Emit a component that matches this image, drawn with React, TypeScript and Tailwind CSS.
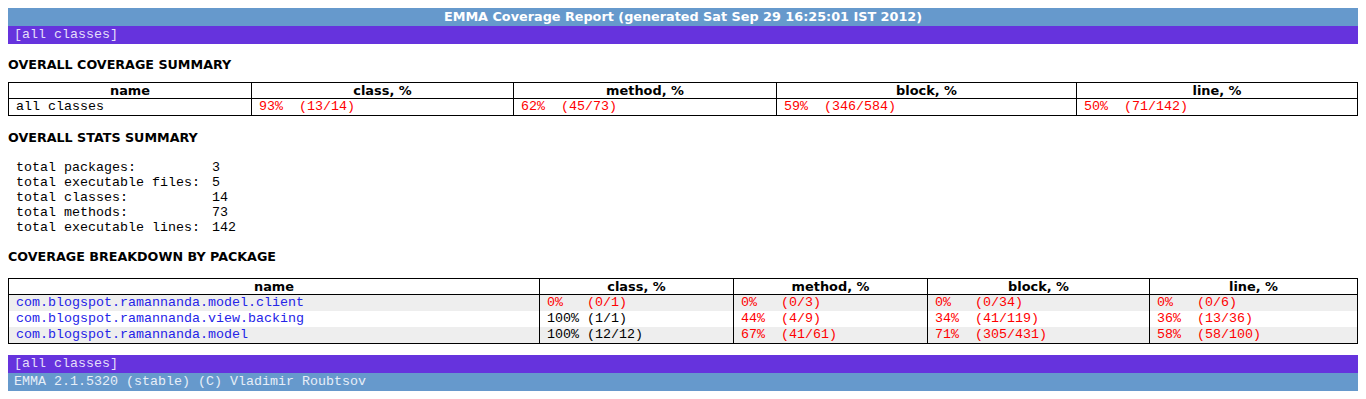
import React from "react";

type Cov = { pct: string; frac: string; low: boolean };

const summary: Cov[] = [
  { pct: "93%", frac: "(13/14)", low: true },
  { pct: "62%", frac: "(45/73)", low: true },
  { pct: "59%", frac: "(346/584)", low: true },
  { pct: "50%", frac: "(71/142)", low: true },
];

const packages: { name: string; cells: Cov[] }[] = [
  {
    name: "com.blogspot.ramannanda.model.client",
    cells: [
      { pct: "0%", frac: "(0/1)", low: true },
      { pct: "0%", frac: "(0/3)", low: true },
      { pct: "0%", frac: "(0/34)", low: true },
      { pct: "0%", frac: "(0/6)", low: true },
    ],
  },
  {
    name: "com.blogspot.ramannanda.view.backing",
    cells: [
      { pct: "100%", frac: "(1/1)", low: false },
      { pct: "44%", frac: "(4/9)", low: true },
      { pct: "34%", frac: "(41/119)", low: true },
      { pct: "36%", frac: "(13/36)", low: true },
    ],
  },
  {
    name: "com.blogspot.ramannanda.model",
    cells: [
      { pct: "100%", frac: "(12/12)", low: false },
      { pct: "67%", frac: "(41/61)", low: true },
      { pct: "71%", frac: "(305/431)", low: true },
      { pct: "58%", frac: "(58/100)", low: true },
    ],
  },
];

const stats = [
  ["total packages:", "3"],
  ["total executable files:", "5"],
  ["total classes:", "14"],
  ["total methods:", "73"],
  ["total executable lines:", "142"],
];

const headers = ["name", "class, %", "method, %", "block, %", "line, %"];

function Heading({ children, className }: { children: React.ReactNode; className: string }) {
  return (
    <h2 className={`text-[12.7px] leading-[16px] font-bold text-black font-['DejaVu_Sans',Verdana,sans-serif] ${className}`}>
      {children}
    </h2>
  );
}

function HeadRow() {
  return (
    <tr>
      {headers.map((h) => (
        <th
          key={h}
          className="h-[16px] p-0 border-y border-r border-black text-center text-[12.9px] leading-[14px] font-bold font-['DejaVu_Sans',Verdana,sans-serif]"
        >
          {h}
        </th>
      ))}
    </tr>
  );
}

function CovCell({ c }: { c: Cov }) {
  return (
    <td className={`p-0 pl-[7px] border-r border-black whitespace-pre ${c.low ? "text-[#ff0000]" : "text-black"}`}>
      {c.pct.padEnd(5, " ") + c.frac}
    </td>
  );
}

function NavBar() {
  return (
    <div className="h-[18px] bg-[#6633dd] pl-[6px] text-[13.33px] leading-[18px] text-[#e4defa] font-['Liberation_Mono','Courier_New',monospace]">
      [all classes]
    </div>
  );
}

export default function App() {
  return (
    <div className="min-h-screen bg-white p-2 pb-0 font-['Liberation_Mono','Courier_New',monospace] text-[13.33px] text-black">
      <div className="h-[18px] bg-[#6699cc] text-center text-[12.8px] leading-[18px] font-bold text-white font-['DejaVu_Sans',Verdana,sans-serif]">
        EMMA Coverage Report (generated Sat Sep 29 16:25:01 IST 2012)
      </div>
      <NavBar />

      <Heading className="mt-[13px]">OVERALL COVERAGE SUMMARY</Heading>
      <table className="mt-[9px] w-full table-fixed border-collapse border-l border-b border-black">
        <colgroup>
          <col className="w-[243px]" />
          <col className="w-[262px]" />
          <col className="w-[263px]" />
          <col className="w-[300px]" />
          <col className="w-[281px]" />
        </colgroup>
        <thead>
          <HeadRow />
        </thead>
        <tbody>
          <tr className="h-[16px] leading-[16px]">
            <td className="p-0 pl-[7px] border-r border-black">all classes</td>
            {summary.map((c, i) => (
              <CovCell key={i} c={c} />
            ))}
          </tr>
        </tbody>
      </table>

      <Heading className="mt-[14px]">OVERALL STATS SUMMARY</Heading>
      <table className="mt-[14px] border-collapse">
        <tbody>
          {stats.map(([label, value]) => (
            <tr key={label} className="h-[15px] leading-[15px]">
              <td className="w-[204px] p-0 pl-[8px] whitespace-pre">{label}</td>
              <td className="p-0">{value}</td>
            </tr>
          ))}
        </tbody>
      </table>

      <Heading className="mt-[14px]">COVERAGE BREAKDOWN BY PACKAGE</Heading>
      <table className="mt-[13px] w-full table-fixed border-collapse border-l border-b border-black">
        <colgroup>
          <col className="w-[531px]" />
          <col className="w-[194px]" />
          <col className="w-[194px]" />
          <col className="w-[222px]" />
          <col className="w-[208px]" />
        </colgroup>
        <thead>
          <HeadRow />
        </thead>
        <tbody>
          {packages.map((p, i) => (
            <tr key={p.name} className={`h-[16px] leading-[16px] ${i % 2 === 0 ? "bg-[#eeeeee]" : "bg-white"}`}>
              <td className="p-0 pl-[7px] border-r border-black text-[#2424e8]">{p.name}</td>
              {p.cells.map((c, j) => (
                <CovCell key={j} c={c} />
              ))}
            </tr>
          ))}
        </tbody>
      </table>

      <div className="mt-[11px]">
        <NavBar />
        <div className="h-[18px] bg-[#6699cc] pl-[6px] text-[13.33px] leading-[18px] text-[#e6eef8] font-['Liberation_Mono','Courier_New',monospace]">
          EMMA 2.1.5320 (stable) (C) Vladimir Roubtsov
        </div>
      </div>
    </div>
  );
}
